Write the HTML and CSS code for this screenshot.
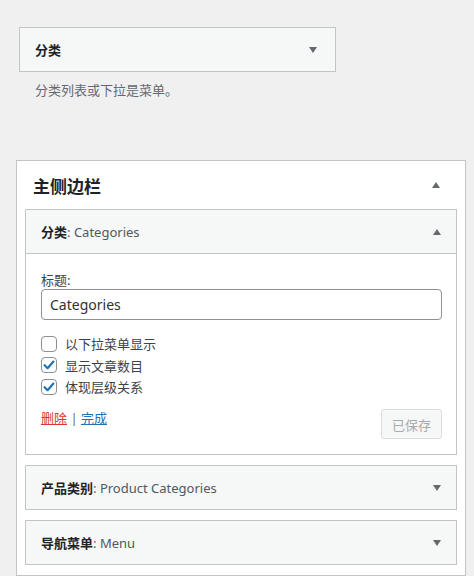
FILE: index.html
```html
<!DOCTYPE html>
<html lang="zh-CN">
<head>
<meta charset="utf-8">
<title>小工具</title>
<link rel="stylesheet" href="styles.css">
</head>
<body>
<div class="avail-widget">
  <span class="avail-title">分类</span>
  <span class="tri-down"></span>
</div>
<p class="avail-desc">分类列表或下拉是菜单。</p>

<div class="sidebar">
  <div class="sidebar-head">
    <h2 class="sidebar-name">主侧边栏</h2>
    <span class="tri-up"></span>
  </div>
  <div class="widgets">
    <div class="widget open">
      <div class="widget-top">
        <span class="widget-title"><b>分类</b>: Categories</span>
        <span class="tri-up"></span>
      </div>
      <div class="widget-inside">
        <label class="field-label" for="title">标题:</label>
        <input class="text-input" id="title" type="text" value="Categories">
        <div class="checks">
          <div class="check-row"><span class="cb"></span><span>以下拉菜单显示</span></div>
          <div class="check-row"><span class="cb"><svg viewBox="0 0 16 16" width="16" height="16"><path d="M3.6 8.2 L6.6 11.2 L12.4 4.6" fill="none" stroke="#2271b1" stroke-width="2.2" stroke-linecap="round" stroke-linejoin="round"/></svg></span><span>显示文章数目</span></div>
          <div class="check-row"><span class="cb"><svg viewBox="0 0 16 16" width="16" height="16"><path d="M3.6 8.2 L6.6 11.2 L12.4 4.6" fill="none" stroke="#2271b1" stroke-width="2.2" stroke-linecap="round" stroke-linejoin="round"/></svg></span><span>体现层级关系</span></div>
        </div>
        <div class="actions">
          <div class="links"><a class="del" href="#">删除</a><span class="sep"> | </span><a class="done" href="#">完成</a></div>
          <button class="saved" type="button" disabled>已保存</button>
        </div>
      </div>
    </div>
    <div class="widget">
      <div class="widget-top">
        <span class="widget-title"><b>产品类别</b>: Product Categories</span>
        <span class="tri-down"></span>
      </div>
    </div>
    <div class="widget">
      <div class="widget-top">
        <span class="widget-title"><b>导航菜单</b>: Menu</span>
        <span class="tri-down"></span>
      </div>
    </div>
  </div>
</div>
</body>
</html>
```
FILE: styles.css
```css
* { box-sizing: border-box; }
html, body {
  margin: 0;
  background: #f0f0f1;
}
body {
  padding-top: 27px;
  font-family: "Noto Sans", "Noto Sans CJK SC", sans-serif;
  font-size: 13px;
  color: #3c434a;
}

.tri-down, .tri-up {
  display: block;
  width: 0;
  height: 0;
  border-left: 4px solid transparent;
  border-right: 4px solid transparent;
}
.tri-down { border-top: 6px solid #646970; }
.tri-up { border-bottom: 6px solid #646970; }

.avail-widget {
  margin-left: 19px;
  width: 317px;
  height: 45px;
  border: 1px solid #c3c4c7;
  background: #f6f7f7;
  display: flex;
  align-items: center;
  justify-content: space-between;
  padding: 0 18px 0 15px;
}
.avail-title {
  font-weight: 700;
  color: #1d2327;
  font-size: 13px;
}
.avail-desc {
  margin: 8px 0 0 35px;
  line-height: 20px;
  color: #646970;
}

.sidebar {
  margin: 60px 0 0 16px;
  width: 450px;
  background: #fff;
  border: 1px solid #c3c4c7;
}
.sidebar-head {
  height: 48px;
  display: flex;
  align-items: center;
  justify-content: space-between;
  padding: 0 25px 0 16px;
}
.sidebar-name {
  margin: 0;
  font-size: 17px;
  font-weight: 700;
  color: #1d2327;
}
.widgets {
  display: flex;
  flex-direction: column;
  gap: 10px;
  padding: 0 8px 10px;
}
.widget {
  border: 1px solid #c3c4c7;
  background: #f6f7f7;
}
.widget-top {
  height: 43px;
  display: flex;
  align-items: center;
  justify-content: space-between;
  padding: 0 15px 0 15px;
}
.widget.open .widget-top { border-bottom: 1px solid #c3c4c7; height: 44px; }
.widget-title {
  color: #50575e;
}
.widget-title b { color: #1d2327; font-weight: 700; }

.widget-inside {
  background: #fff;
  padding: 17px 14px 15px 15px;
}
.field-label {
  display: block;
  line-height: 18px;
  color: #3c434a;
}
.text-input {
  display: block;
  width: 100%;
  height: 31px;
  border: 1px solid #8c8f94;
  border-radius: 4px;
  padding: 0 8px;
  font-family: "Noto Sans", "Noto Sans CJK SC", sans-serif;
  font-size: 14px;
  color: #2c3338;
  background: #fff;
}
.checks {
  margin-top: 13px;
}
.check-row {
  height: 21.5px;
  display: flex;
  align-items: center;
  gap: 8px;
  color: #3c434a;
}
.cb {
  width: 16px;
  height: 16px;
  border: 1px solid #8c8f94;
  border-radius: 4px;
  background: #fff;
  position: relative;
}
.cb svg {
  position: absolute;
  left: -1px;
  top: -1px;
}
.actions {
  margin-top: 11.5px;
  display: flex;
  justify-content: space-between;
  align-items: flex-start;
}
.links { line-height: 18px; }
.del { color: #d63638; text-decoration: underline; }
.done { color: #2271b1; text-decoration: underline; }
.sep { color: #646970; }
.saved {
  width: 61px;
  height: 30px;
  border: 1px solid #dcdcde;
  border-radius: 3px;
  background: #f6f7f7;
  color: #a7aaad;
  font-family: "Noto Sans", "Noto Sans CJK SC", sans-serif;
  font-size: 13px;
  padding: 0;
}
```
